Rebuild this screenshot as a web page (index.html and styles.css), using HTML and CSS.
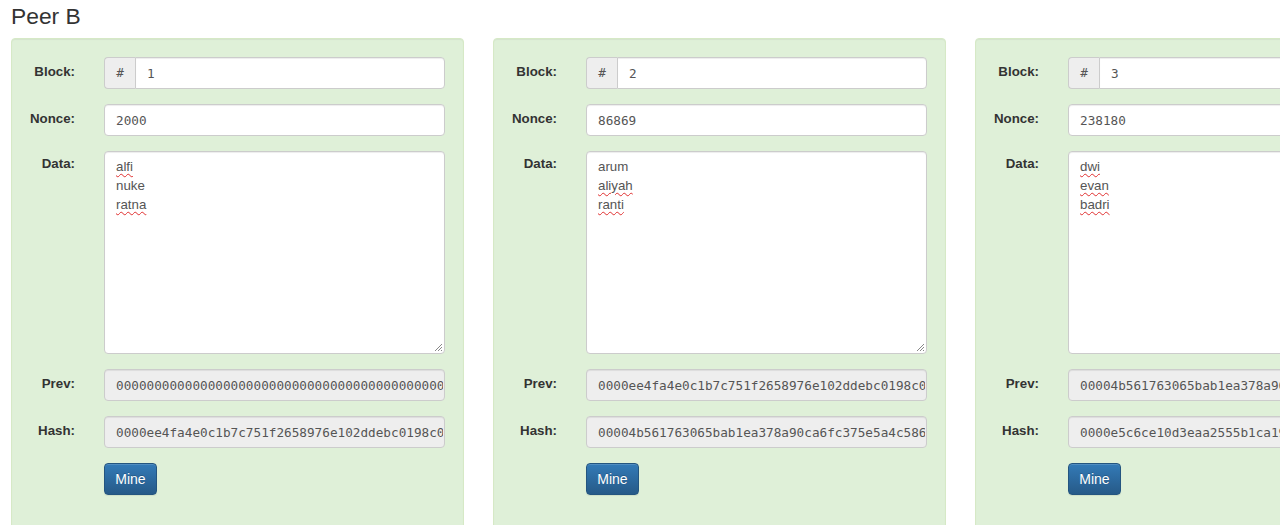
FILE: index.html
```html
<!DOCTYPE html>
<html>
<head>
<meta charset="utf-8">
<title>Peer B</title>
<link rel="stylesheet" href="styles.css">
</head>
<body>
<h3 class="peer-title">Peer B</h3>
<div class="chain">
  <div class="well">
    <div class="form-grid">
      <label class="lbl">Block:</label>
      <div class="input-group"><span class="addon">#</span><input class="ctrl mono grp" type="text" value="1"></div>
      <label class="lbl">Nonce:</label>
      <input class="ctrl mono" type="text" value="2000">
      <label class="lbl lbl-top">Data:</label>
      <div class="ctrl area"><span class="sp">alfi</span><br>nuke<br><span class="sp">ratna</span><svg class="grip" width="10" height="10" viewBox="0 0 10 10"><path d="M9 2 L2 9 M9 5 L5 9 M9 8 L8 9" stroke="#888" stroke-width="1"/></svg></div>
      <label class="lbl">Prev:</label>
      <input class="ctrl mono ro" type="text" readonly value="0000000000000000000000000000000000000000000000000000000000000000">
      <label class="lbl">Hash:</label>
      <input class="ctrl mono ro" type="text" readonly value="0000ee4fa4e0c1b7c751f2658976e102ddebc0198c0a9b8f7e6d5c4b3a29180">
      <span></span>
      <div class="btn-row"><button class="btn">Mine</button></div>
    </div>
  </div>
  <div class="well">
    <div class="form-grid">
      <label class="lbl">Block:</label>
      <div class="input-group"><span class="addon">#</span><input class="ctrl mono grp" type="text" value="2"></div>
      <label class="lbl">Nonce:</label>
      <input class="ctrl mono" type="text" value="86869">
      <label class="lbl lbl-top">Data:</label>
      <div class="ctrl area">arum<br><span class="sp">aliyah</span><br><span class="sp">ranti</span><svg class="grip" width="10" height="10" viewBox="0 0 10 10"><path d="M9 2 L2 9 M9 5 L5 9 M9 8 L8 9" stroke="#888" stroke-width="1"/></svg></div>
      <label class="lbl">Prev:</label>
      <input class="ctrl mono ro" type="text" readonly value="0000ee4fa4e0c1b7c751f2658976e102ddebc0198c0a9b8f7e6d5c4b3a29180">
      <label class="lbl">Hash:</label>
      <input class="ctrl mono ro" type="text" readonly value="00004b561763065bab1ea378a90ca6fc375e5a4c5861d2e3f4a5b6c7d8e9f01">
      <span></span>
      <div class="btn-row"><button class="btn">Mine</button></div>
    </div>
  </div>
  <div class="well">
    <div class="form-grid">
      <label class="lbl">Block:</label>
      <div class="input-group"><span class="addon">#</span><input class="ctrl mono grp" type="text" value="3"></div>
      <label class="lbl">Nonce:</label>
      <input class="ctrl mono" type="text" value="238180">
      <label class="lbl lbl-top">Data:</label>
      <div class="ctrl area"><span class="sp">dwi</span><br><span class="sp">evan</span><br><span class="sp">badri</span><svg class="grip" width="10" height="10" viewBox="0 0 10 10"><path d="M9 2 L2 9 M9 5 L5 9 M9 8 L8 9" stroke="#888" stroke-width="1"/></svg></div>
      <label class="lbl">Prev:</label>
      <input class="ctrl mono ro" type="text" readonly value="00004b561763065bab1ea378a90ca6fc375e5a4c5861d2e3f4a5b6c7d8e9f01">
      <label class="lbl">Hash:</label>
      <input class="ctrl mono ro" type="text" readonly value="0000e5c6ce10d3eaa2555b1ca19f7a3e2d1c0b9a8f7e6d5c4b3a291807f6e5d">
      <span></span>
      <div class="btn-row"><button class="btn">Mine</button></div>
    </div>
  </div>
</div>
</body>
</html>
```

FILE: styles.css
```css
html, body {
  margin: 0;
  padding: 0;
  background: #fff;
  overflow: hidden;
  width: 1280px;
  height: 525px;
}
body {
  font-family: "Liberation Sans", Arial, sans-serif;
  font-size: 13.3px;
  color: #333;
}
.peer-title {
  margin: 4px 0 9px 11px;
  font-size: 22.8px;
  line-height: 25px;
  font-weight: 400;
  color: #333;
}
.chain {
  display: flex;
  gap: 29px;
  padding-left: 11px;
  width: max-content;
}
.well {
  flex: 0 0 auto;
  width: 453px;
  box-sizing: border-box;
  background: #dff0d8;
  border: 1px solid #d6e9c6;
  border-radius: 4px;
  padding: 18px 18px 40px 18px;
  box-shadow: inset 0 1px 1px rgba(0,0,0,0.05);
}
.form-grid {
  display: grid;
  grid-template-columns: 45px 341px;
  column-gap: 29px;
  row-gap: 15px;
  align-items: center;
}
.lbl {
  font-weight: 700;
  text-align: right;
  white-space: nowrap;
  line-height: 32px;
  justify-self: end;
  color: #333;
  margin-top: -2px;
}
.lbl-top {
  align-self: start;
  line-height: 30px;
}
.ctrl {
  display: block;
  box-sizing: border-box;
  width: 100%;
  height: 32px;
  margin: 0;
  border: 1px solid #ccc;
  border-radius: 4px;
  background: #fff;
  color: #555;
  padding: 0 1px 0 11px;
  line-height: 30px;
  white-space: nowrap;
  overflow: hidden;
  outline: none;
  box-shadow: inset 0 1px 1px rgba(0,0,0,0.075);
}
.mono {
  font-family: "DejaVu Sans Mono", Consolas, monospace;
  font-size: 12.7px;
}
.ro {
  background: #eee;
}
.input-group {
  display: flex;
  height: 32px;
}
.addon {
  box-sizing: border-box;
  width: 31px;
  flex: 0 0 31px;
  height: 32px;
  background: #eee;
  border: 1px solid #ccc;
  border-right: 0;
  border-radius: 4px 0 0 4px;
  color: #555;
  text-align: center;
  line-height: 30px;
  font-family: "DejaVu Sans Mono", Consolas, monospace;
  font-size: 12.7px;
}
.grp {
  flex: 1 1 auto;
  width: auto;
  min-width: 0;
  border-radius: 0 4px 4px 0;
}
.area {
  position: relative;
  height: 203px;
  padding: 5px 11px;
  line-height: 19px;
  font-size: 13.3px;
  white-space: normal;
}
.sp {
  text-decoration: underline wavy #e03030;
  text-decoration-thickness: 1px;
  text-underline-offset: 2px;
}
.grip {
  position: absolute;
  right: 1px;
  bottom: 1px;
}
.btn-row {
  display: flex;
}
.btn {
  box-sizing: border-box;
  height: 32px;
  width: 53px;
  padding: 0;
  font-family: "Liberation Sans", Arial, sans-serif;
  font-size: 14px;
  color: #fff;
  background: linear-gradient(to bottom, #337ab7 0%, #265a88 100%);
  border: 1px solid #245580;
  border-radius: 4px;
  text-shadow: 0 -1px 0 rgba(0,0,0,0.2);
  box-shadow: inset 0 1px 0 rgba(255,255,255,0.15), 0 1px 1px rgba(0,0,0,0.075);
}
```
